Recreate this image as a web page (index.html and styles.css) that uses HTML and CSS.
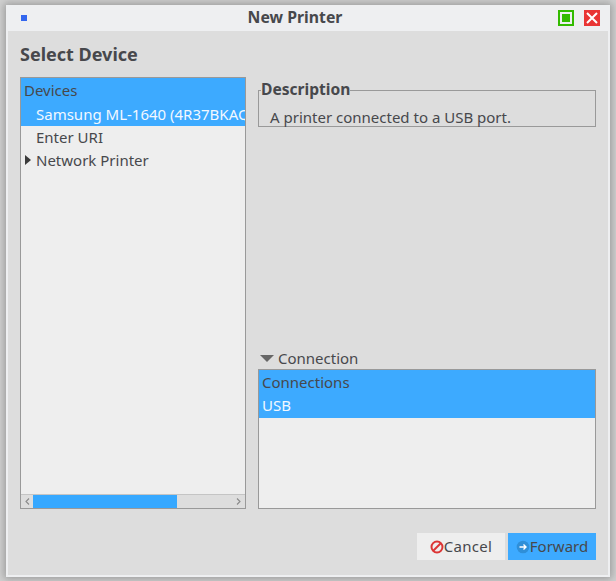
FILE: index.html
```html
<!DOCTYPE html>
<html lang="en">
<head>
<meta charset="utf-8">
<title>New Printer</title>
<link rel="stylesheet" href="styles.css">
</head>
<body>
<div class="window">
  <header class="titlebar">
    <span class="app-icon"></span>
    <h1 class="title">New Printer</h1>
    <div class="controls">
      <svg class="ctl" width="16" height="16" viewBox="0 0 16 16"><rect width="16" height="16" fill="#33bb00"/><rect x="2" y="2" width="12" height="12" fill="#eef0f1"/><rect x="4" y="4" width="8" height="8" fill="#33bb00"/></svg>
      <svg class="ctl" width="16" height="16" viewBox="0 0 16 16"><rect width="16" height="16" fill="#e93535"/><path d="M3 3 13 13M13 3 3 13" stroke="#fff" stroke-width="2" fill="none"/></svg>
    </div>
  </header>
  <main class="content">
    <h2 class="heading">Select Device</h2>
    <div class="columns">
      <section class="tree">
        <div class="tree-body">
          <div class="row selected head">Devices</div>
          <div class="row selected child white">Samsung ML-1640 (4R37BKAQ</div>
          <div class="row child">Enter URI</div>
          <div class="row child"><span class="arrow"></span>Network Printer</div>
        </div>
        <div class="scrollbar">
          <span class="step"><svg width="5" height="7" viewBox="0 0 5 7"><path d="M4 .5 1 3.500 4 6.500" stroke="#8a8a8a" stroke-width="1.100" fill="none"/></svg></span>
          <div class="trough"><div class="thumb"></div></div>
          <span class="step"><svg width="5" height="7" viewBox="0 0 5 7"><path d="M1 .5 4 3.500 1 6.500" stroke="#8a8a8a" stroke-width="1.100" fill="none"/></svg></span>
        </div>
      </section>
      <div class="side">
        <fieldset class="desc">
          <legend>Description</legend>
          <p>A printer connected to a USB port.</p>
        </fieldset>
        <div class="expander"><span class="down"></span>Connection</div>
        <section class="list">
          <div class="row selected head-r">Connections</div>
          <div class="row selected head-r white usb">USB</div>
        </section>
      </div>
    </div>
    <footer class="actions">
      <button class="btn cancel"><svg class="btn-icon" width="14" height="14" viewBox="0 0 14 14"><circle cx="7" cy="7" r="5.500" fill="none" stroke="#dc3535" stroke-width="2"/><path d="M3 11 11 3" stroke="#dc3535" stroke-width="2"/></svg>Cancel</button>
      <button class="btn forward"><svg class="btn-icon" width="14" height="14" viewBox="0 0 14 14"><circle cx="7" cy="7" r="6.300" fill="#2f8fd8"/><path d="M3.500 7H10M7.500 4.500 10 7 7.500 9.500" stroke="#fff" stroke-width="1.400" fill="none"/></svg>Forward</button>
    </footer>
  </main>
</div>
</body>
</html>
```
FILE: styles.css
```css
* { box-sizing: border-box; }
html, body { margin: 0; height: 100%; }
body {
  width: 616px;
  height: 581px;
  padding: 5px 6px 4px;
  overflow: hidden;
  background: #d2d2d2;
  font-family: "Noto Sans", sans-serif;
  font-size: 15px;
  color: #47484c;
}
.window {
  width: 604px;
  height: 572px;
  display: flex;
  flex-direction: column;
  background: #eeeff1;
  box-shadow: 0 0 8px 2px rgba(110, 110, 110, .55);
  padding: 0 2px 2px;
}
.titlebar {
  height: 26px;
  flex: none;
  display: flex;
  align-items: center;
  padding: 0 8px 0 13px;
}
.app-icon { width: 6px; height: 6px; background: #3366ee; }
.title {
  flex: 1;
  margin: 0;
  text-align: center;
  font-size: 15.800px;
  font-weight: 700;
  line-height: 24px;
  padding: 0 0 2px 5px;
}
.controls { display: flex; gap: 10px; }
.ctl { display: block; }
.content {
  flex: 1;
  background: #dddddd;
  padding: 10px 12px 13px;
  display: flex;
  flex-direction: column;
  min-height: 0;
}
.heading {
  margin: 0;
  font-size: 18px;
  font-weight: 700;
  line-height: 26px;
  height: 36px;
}
.columns { display: flex; gap: 12px; height: 432px; flex: none; }
.tree {
  width: 226px;
  border: 1px solid #999;
  background: #eeeeee;
  display: flex;
  flex-direction: column;
  overflow: hidden;
}
.tree-body { flex: 1; overflow: hidden; }
.row {
  height: 24px;
  line-height: 24px;
  white-space: nowrap;
  overflow: hidden;
  position: relative;
}
.selected { background: #3daaff; }
.white { color: #f2f8ff; }
.head { padding-left: 3px; }
.child { padding-left: 15px; height: 23px; line-height: 23px; }
.selected.child { height: 24px; line-height: 24px; }
.arrow {
  position: absolute;
  left: 4px;
  top: 6px;
  border-left: 6px solid #3c3c3c;
  border-top: 5.500px solid transparent;
  border-bottom: 5.500px solid transparent;
}
.scrollbar {
  height: 14px;
  flex: none;
  display: flex;
  background: #dddddd;
  border-top: 1px solid #c4c4c4;
  padding: 0 1px;
}
.step { width: 11px; display: flex; align-items: center; justify-content: center; flex: none; }
.trough { flex: 1; background: #dddddd; }
.thumb { width: 144px; height: 100%; background: #36a8ff; }
.side { flex: 1; display: flex; flex-direction: column; min-width: 0; }
.desc {
  margin: 2px 0 0;
  padding: 0 11px;
  height: 48px;
  border: 1px solid #999;
  min-width: 0;
}
.desc legend {
  padding: 0 0 2px;
  margin-left: -9px;
  font-size: 15.600px;
  font-weight: 700;
  line-height: 20px;
}
.desc p { margin: 0; line-height: 20px; padding-top: 6px; white-space: nowrap; }
.expander {
  margin-top: auto;
  height: 20px;
  line-height: 20px;
  display: flex;
  align-items: center;
  gap: 4px;
  padding-left: 2px;
  margin-bottom: 1px;
}
.down {
  border-top: 7px solid #666;
  border-left: 7px solid transparent;
  border-right: 7px solid transparent;
}
.list {
  height: 140px;
  flex: none;
  border: 1px solid #999;
  background: #eeeeee;
}
.head-r { padding-left: 3px; }
.usb { line-height: 23px; }
.actions { display: flex; justify-content: flex-end; gap: 3px; margin-top: 24px; }
.btn {
  width: 88px;
  height: 27px;
  border: 0;
  padding: 0 0 2px;
  font: inherit;
  color: inherit;
  display: flex;
  align-items: center;
  justify-content: center;
}
.btn-icon { margin-top: 2px; }
.cancel { background: #eeeeee; letter-spacing: .3px; }
.forward { background: #3daaff; }
```
